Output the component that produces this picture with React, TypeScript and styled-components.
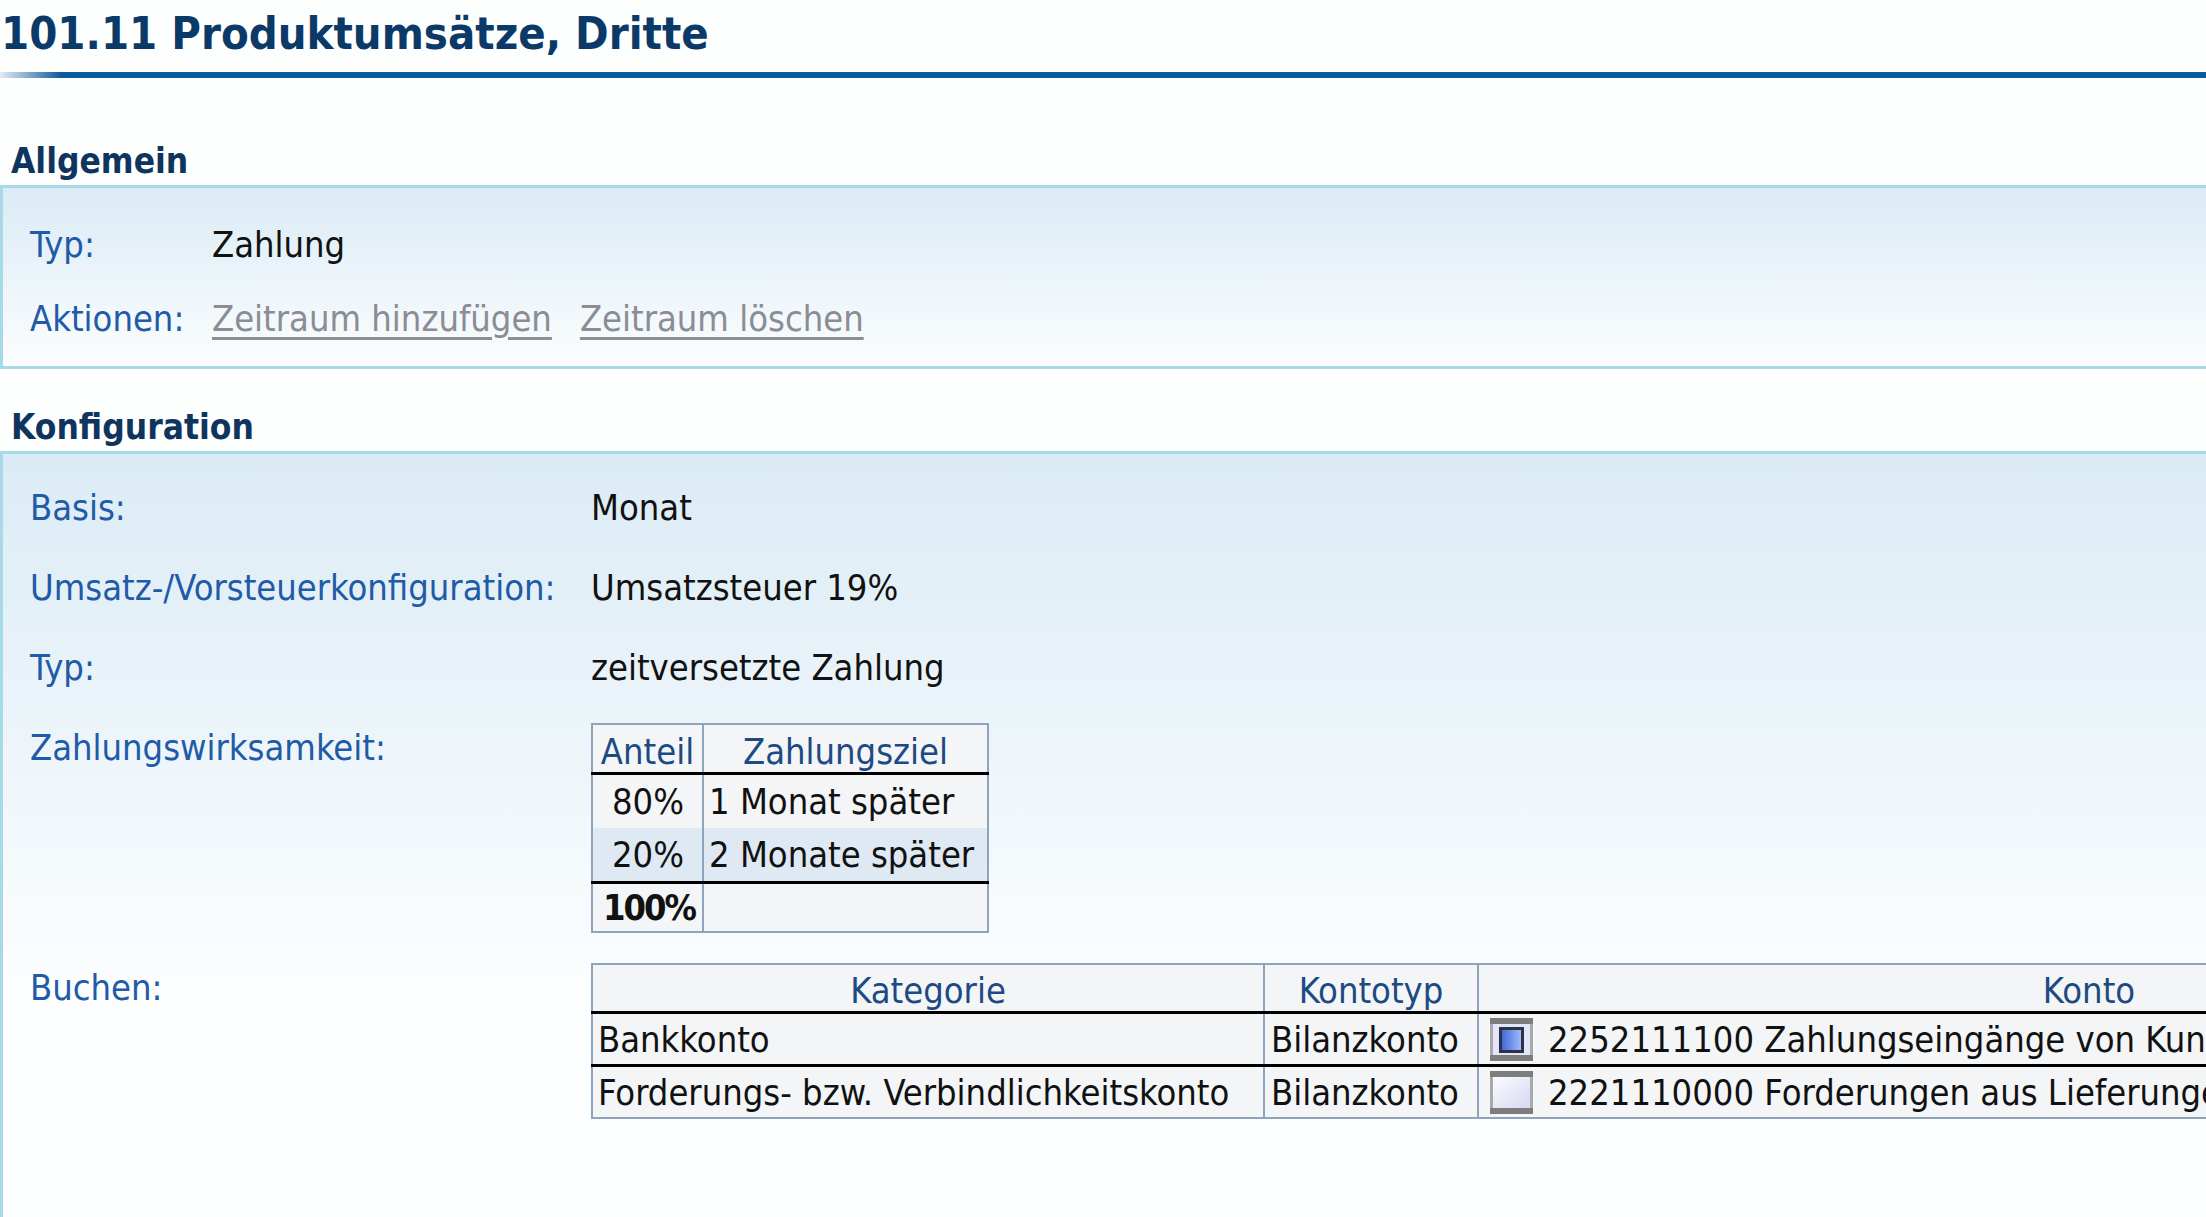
import styled, { createGlobalStyle } from 'styled-components';

const GlobalStyle = createGlobalStyle`
    html, body {
        margin: 0;
        padding: 0;
        overflow: hidden;
        background: #fdfefe;
    }
    body {
        font-family: "DejaVu Sans Condensed", "DejaVu Sans", "Liberation Sans", sans-serif;
        font-size: 36px;
        color: #111;
    }
`;

const Page = styled.div`
    width: 2206px;
    height: 1217px;
    overflow: hidden;
`;

const Title = styled.h1`
    margin: 0;
    padding: 10px 0 14px 1px;
    font-size: 45px;
    line-height: 48px;
    font-weight: bold;
    color: #0b3a69;
    white-space: nowrap;
`;

const TitleRule = styled.div`
    height: 6px;
    background: linear-gradient(to right, #e4ecf4 0, #0b5a9b 62px);
`;

const SectionTitle = styled.h2<{ $top: number }>`
    margin: ${p => p.$top}px 0 4px;
    padding-left: 11px;
    font-size: 35px;
    line-height: 40px;
    font-weight: bold;
    color: #0f355f;
`;

const Panel = styled.div<{ $fade: string }>`
    border-top: 3px solid #a8d9e6;
    border-bottom: 3px solid #a8d9e6;
    border-left: 3px solid #a8d9e6;
    background: linear-gradient(to bottom, #dbebf5 0, #fbfdfe ${p => p.$fade});
`;

const FieldGrid = styled.div<{ $labelWidth: number; $gap: number; $line: number }>`
    display: grid;
    grid-template-columns: ${p => p.$labelWidth}px minmax(0, 1fr);
    row-gap: ${p => p.$gap}px;
    align-items: start;
    padding-left: 27px;
    line-height: ${p => p.$line}px;
    white-space: nowrap;
`;

const GeneralGrid = styled(FieldGrid)`
    padding-top: 37px;
    padding-bottom: 27px;
`;

const ConfigGrid = styled(FieldGrid)`
    padding-top: 29px;
    padding-bottom: 160px;
`;

const Label = styled.div`
    color: #215aa6;
`;

const Value = styled.div`
    color: #111;
`;

const Actions = styled.div`
    display: flex;
    gap: 28px;
`;

const ActionLink = styled.a`
    color: #8b8c94;
    text-decoration: underline;
    text-decoration-color: #8d8e96;
    text-decoration-thickness: 3px;
    text-underline-offset: 6px;
    cursor: pointer;
`;

const Grid = styled.table<{ $width: number }>`
    border-collapse: collapse;
    table-layout: fixed;
    width: ${p => p.$width}px;
    background: #f3f5f7;
    border: 2px solid #8ea4bc;
    line-height: normal;
`;

const HeadCell = styled.th<{ $height: number }>`
    height: ${p => p.$height}px;
    padding: 0 4px;
    font-weight: normal;
    color: #1e4a84;
    text-align: center;
    vertical-align: bottom;
    border-left: 2px solid #8ea4bc;
    border-bottom: 3px solid #000;
    white-space: nowrap;
    overflow: hidden;
`;

const Row = styled.tr<{ $shade?: boolean; $total?: boolean }>`
    background: ${p => (p.$shade ? '#dfe9f4' : 'transparent')};
    border-top: ${p => (p.$total ? '3px solid #000' : 'none')};
`;

const Cell = styled.td<{ $height: number; $align?: string; $bold?: boolean; $pad?: number }>`
    height: ${p => p.$height}px;
    padding: 0 4px 0 ${p => p.$pad ?? 5}px;
    text-align: ${p => p.$align ?? 'left'};
    font-weight: ${p => (p.$bold ? 'bold' : 'normal')};
    letter-spacing: ${p => (p.$bold ? '-2px' : 'normal')};
    vertical-align: middle;
    border-left: 2px solid #8ea4bc;
    white-space: nowrap;
    overflow: hidden;
`;

const IconSlot = styled.span`
    display: inline-block;
    width: 43px;
    height: 43px;
    margin-right: 15px;
    vertical-align: -9px;

    svg {
        display: block;
    }
`;

function AccountIcon({ selected }: { selected?: boolean }) {
    return (
        <IconSlot>
            <svg width="43" height="43" viewBox="0 0 43 43">
                <defs>
                    <linearGradient id="paneGrad" x1="0" y1="0" x2="1" y2="1">
                        <stop offset="0" stopColor="#fbfbff" />
                        <stop offset="1" stopColor="#d5d9f2" />
                    </linearGradient>
                    <linearGradient id="chipGrad" x1="0" y1="0" x2="1" y2="0">
                        <stop offset="0" stopColor="#3c63d4" />
                        <stop offset="1" stopColor="#a6c1ff" />
                    </linearGradient>
                </defs>
                <rect x="0" y="0" width="43" height="43" fill="#7d7d7d" />
                <rect x="0" y="6" width="43" height="31" fill="#a9a9a9" />
                <rect x="3" y="6" width="37" height="31" fill={selected ? '#e3e6f8' : 'url(#paneGrad)'} />
                {selected && (
                    <rect x="10.5" y="10.5" width="22" height="23" fill="url(#chipGrad)" stroke="#2c3343" strokeWidth="3" />
                )}
            </svg>
        </IconSlot>
    );
}

const payments = [
    { share: '80%', term: '1 Monat später' },
    { share: '20%', term: '2 Monate später' },
];

const postings = [
    { category: 'Bankkonto', type: 'Bilanzkonto', account: '2252111100 Zahlungseingänge von Kunden', selected: true },
    { category: 'Forderungs- bzw. Verbindlichkeitskonto', type: 'Bilanzkonto', account: '2221110000 Forderungen aus Lieferungen und Leistungen', selected: false },
];

export default function App() {
    return (
        <Page>
            <GlobalStyle />
            <Title>101.11 Produktumsätze, Dritte</Title>
            <TitleRule />

            <SectionTitle $top={63}>Allgemein</SectionTitle>
            <Panel $fade="100%">
                <GeneralGrid $labelWidth={182} $gap={34} $line={40}>
                    <Label>Typ:</Label>
                    <Value>Zahlung</Value>
                    <Label>Aktionen:</Label>
                    <Actions>
                        <ActionLink>Zeitraum hinzufügen</ActionLink>
                        <ActionLink>Zeitraum löschen</ActionLink>
                    </Actions>
                </GeneralGrid>
            </Panel>

            <SectionTitle $top={38}>Konfiguration</SectionTitle>
            <Panel $fade="520px">
                <ConfigGrid $labelWidth={561} $gap={30} $line={50}>
                    <Label>Basis:</Label>
                    <Value>Monat</Value>
                    <Label>Umsatz-/Vorsteuerkonfiguration:</Label>
                    <Value>Umsatzsteuer 19%</Value>
                    <Label>Typ:</Label>
                    <Value>zeitversetzte Zahlung</Value>

                    <Label>Zahlungswirksamkeit:</Label>
                    <div>
                        <Grid $width={396}>
                            <colgroup>
                                <col style={{ width: 111 }} />
                                <col style={{ width: 285 }} />
                            </colgroup>
                            <thead>
                                <tr>
                                    <HeadCell $height={47}>Anteil</HeadCell>
                                    <HeadCell $height={47}>Zahlungsziel</HeadCell>
                                </tr>
                            </thead>
                            <tbody>
                                {payments.map((p, i) => (
                                    <Row key={p.share} $shade={i === 1}>
                                        <Cell $height={53} $align="center">{p.share}</Cell>
                                        <Cell $height={53}>{p.term}</Cell>
                                    </Row>
                                ))}
                                <Row $total>
                                    <Cell $height={47} $bold $pad={10}>100%</Cell>
                                    <Cell $height={47}></Cell>
                                </Row>
                            </tbody>
                        </Grid>
                    </div>

                    <Label>Buchen:</Label>
                    <div>
                        <Grid $width={2108}>
                            <colgroup>
                                <col style={{ width: 672 }} />
                                <col style={{ width: 214 }} />
                                <col style={{ width: 1222 }} />
                            </colgroup>
                            <thead>
                                <tr>
                                    <HeadCell $height={46}>Kategorie</HeadCell>
                                    <HeadCell $height={46}>Kontotyp</HeadCell>
                                    <HeadCell $height={46}>Konto</HeadCell>
                                </tr>
                            </thead>
                            <tbody>
                                {postings.map((p, i) => (
                                    <Row key={p.category} $total={i > 0}>
                                        <Cell $height={50}>{p.category}</Cell>
                                        <Cell $height={50} $pad={6}>{p.type}</Cell>
                                        <Cell $height={50} $pad={11}>
                                            <AccountIcon selected={p.selected} />
                                            {p.account}
                                        </Cell>
                                    </Row>
                                ))}
                            </tbody>
                        </Grid>
                    </div>
                </ConfigGrid>
            </Panel>
        </Page>
    );
}
